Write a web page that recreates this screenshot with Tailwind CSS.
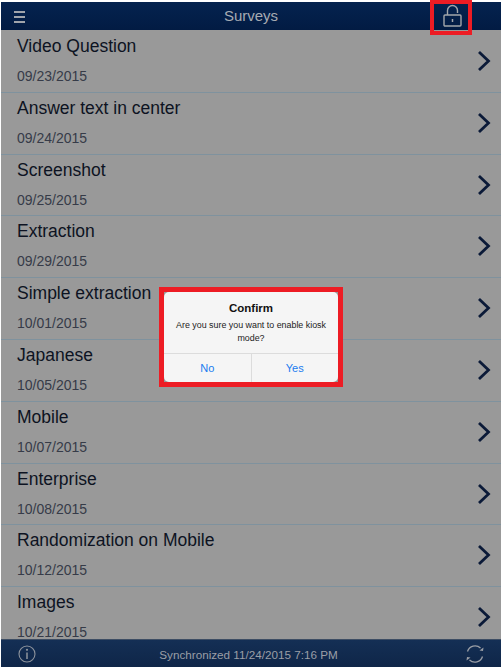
<!DOCTYPE html>
<html lang="en">
<head>
  <meta charset="UTF-8">
  <title>Surveys</title>
  <script src="https://cdn.jsdelivr.net/npm/@tailwindcss/browser@4"></script>
</head>
<body class="bg-white font-['Liberation_Sans',Arial,sans-serif]">
  <div class="relative w-[504px] h-[670px] overflow-hidden pt-[2px] pl-[1px] pr-[3px]">
    <!-- header -->
    <div class="h-[28px] bg-linear-to-b from-[#05234f] to-[#021b43] flex items-center relative">
      <svg class="ml-[13px] mt-[1px] w-[11px] h-[12px]" viewBox="0 0 11 12"><path d="M0 1h11M0 6h11M0 11h11" stroke="#a0a4ab" stroke-width="2"/></svg>
      <div class="absolute inset-x-0 pt-[1px] text-center text-[15px] text-[#a7abb2]">Surveys</div>
      <svg class="absolute left-[441px] top-[2px] w-[20px] h-[24px]" viewBox="0 0 20 24" fill="none">
        <path d="M5.500 11V6.500a5 5 0 0 1 10 0V9" stroke="#a3a6ab" stroke-width="1.4"/>
        <rect x="2" y="11" width="17" height="11" rx="1" stroke="#a3a6ab" stroke-width="1.4"/>
        <path d="M10.500 15v3" stroke="#a3a6ab" stroke-width="1.5"/>
      </svg>
    </div>

    <!-- survey list -->
    <div class="h-[609px] pt-[1px] overflow-hidden bg-[#999999] text-[#0d1322]">
      <div class="h-[61.8px] border-b border-[#7f929e] pl-[16px] relative">
        <div class="pt-[4px] text-[17.5px] leading-[22px]">Video Question</div>
        <div class="mt-[11px] text-[14px] leading-[16px] text-[#363b48]">09/23/2015</div>
        <svg class="absolute right-[10px] top-[19px] w-[14px] h-[22px]" viewBox="0 0 14 22" fill="none"><path d="M2 2l9.500 9-9.500 9" stroke="#0b1a38" stroke-width="2.8"/></svg>
      </div>
      <div class="h-[61.8px] border-b border-[#7f929e] pl-[16px] relative">
        <div class="pt-[4px] text-[17.5px] leading-[22px]">Answer text in center</div>
        <div class="mt-[11px] text-[14px] leading-[16px] text-[#363b48]">09/24/2015</div>
        <svg class="absolute right-[10px] top-[19px] w-[14px] h-[22px]" viewBox="0 0 14 22" fill="none"><path d="M2 2l9.500 9-9.500 9" stroke="#0b1a38" stroke-width="2.8"/></svg>
      </div>
      <div class="h-[61.8px] border-b border-[#7f929e] pl-[16px] relative">
        <div class="pt-[4px] text-[17.5px] leading-[22px]">Screenshot</div>
        <div class="mt-[11px] text-[14px] leading-[16px] text-[#363b48]">09/25/2015</div>
        <svg class="absolute right-[10px] top-[19px] w-[14px] h-[22px]" viewBox="0 0 14 22" fill="none"><path d="M2 2l9.500 9-9.500 9" stroke="#0b1a38" stroke-width="2.8"/></svg>
      </div>
      <div class="h-[61.8px] border-b border-[#7f929e] pl-[16px] relative">
        <div class="pt-[4px] text-[17.5px] leading-[22px]">Extraction</div>
        <div class="mt-[11px] text-[14px] leading-[16px] text-[#363b48]">09/29/2015</div>
        <svg class="absolute right-[10px] top-[19px] w-[14px] h-[22px]" viewBox="0 0 14 22" fill="none"><path d="M2 2l9.500 9-9.500 9" stroke="#0b1a38" stroke-width="2.8"/></svg>
      </div>
      <div class="h-[61.8px] border-b border-[#7f929e] pl-[16px] relative">
        <div class="pt-[4px] text-[17.5px] leading-[22px]">Simple extraction</div>
        <div class="mt-[11px] text-[14px] leading-[16px] text-[#363b48]">10/01/2015</div>
        <svg class="absolute right-[10px] top-[19px] w-[14px] h-[22px]" viewBox="0 0 14 22" fill="none"><path d="M2 2l9.500 9-9.500 9" stroke="#0b1a38" stroke-width="2.8"/></svg>
      </div>
      <div class="h-[61.8px] border-b border-[#7f929e] pl-[16px] relative">
        <div class="pt-[4px] text-[17.5px] leading-[22px]">Japanese</div>
        <div class="mt-[11px] text-[14px] leading-[16px] text-[#363b48]">10/05/2015</div>
        <svg class="absolute right-[10px] top-[19px] w-[14px] h-[22px]" viewBox="0 0 14 22" fill="none"><path d="M2 2l9.500 9-9.500 9" stroke="#0b1a38" stroke-width="2.8"/></svg>
      </div>
      <div class="h-[61.8px] border-b border-[#7f929e] pl-[16px] relative">
        <div class="pt-[4px] text-[17.5px] leading-[22px]">Mobile</div>
        <div class="mt-[11px] text-[14px] leading-[16px] text-[#363b48]">10/07/2015</div>
        <svg class="absolute right-[10px] top-[19px] w-[14px] h-[22px]" viewBox="0 0 14 22" fill="none"><path d="M2 2l9.500 9-9.500 9" stroke="#0b1a38" stroke-width="2.8"/></svg>
      </div>
      <div class="h-[61.8px] border-b border-[#7f929e] pl-[16px] relative">
        <div class="pt-[4px] text-[17.5px] leading-[22px]">Enterprise</div>
        <div class="mt-[11px] text-[14px] leading-[16px] text-[#363b48]">10/08/2015</div>
        <svg class="absolute right-[10px] top-[19px] w-[14px] h-[22px]" viewBox="0 0 14 22" fill="none"><path d="M2 2l9.500 9-9.500 9" stroke="#0b1a38" stroke-width="2.8"/></svg>
      </div>
      <div class="h-[61.8px] border-b border-[#7f929e] pl-[16px] relative">
        <div class="pt-[4px] text-[17.5px] leading-[22px]">Randomization on Mobile</div>
        <div class="mt-[11px] text-[14px] leading-[16px] text-[#363b48]">10/12/2015</div>
        <svg class="absolute right-[10px] top-[19px] w-[14px] h-[22px]" viewBox="0 0 14 22" fill="none"><path d="M2 2l9.500 9-9.500 9" stroke="#0b1a38" stroke-width="2.8"/></svg>
      </div>
      <div class="h-[61.8px] pl-[16px] relative">
        <div class="pt-[4px] text-[17.5px] leading-[22px]">Images</div>
        <div class="mt-[11px] text-[14px] leading-[16px] text-[#363b48]">10/21/2015</div>
        <svg class="absolute right-[10px] top-[19px] w-[14px] h-[22px]" viewBox="0 0 14 22" fill="none"><path d="M2 2l9.500 9-9.500 9" stroke="#0b1a38" stroke-width="2.8"/></svg>
      </div>
    </div>

    <!-- footer -->
    <div class="h-[28px] bg-linear-to-b from-[#142f55] to-[#0f2648] border-t border-[#3d4d63] flex items-center justify-between relative">
      <svg class="ml-[17px] w-[18px] h-[18px]" viewBox="0 0 18 18" fill="none"><circle cx="9" cy="9" r="8" stroke="#8e949d" stroke-width="1.1"/><path d="M9 7.500V14" stroke="#8e949d" stroke-width="1.500"/><circle cx="9" cy="4.800" r="1.100" fill="#8e949d"/></svg>
      <div class="absolute inset-x-0 pr-[5px] pt-[2px] text-center text-[11.7px] text-[#9a9ea6]">Synchronized 11/24/2015 7:16 PM</div>
      <svg class="mr-[16px] w-[20px] h-[20px]" viewBox="0 0 20 20" fill="none">
        <path d="M2.500 7.500A8 8 0 0 1 15.500 4" stroke="#9a9ea6" stroke-width="1.300"/>
        <path d="M17.500 12.500A8 8 0 0 1 4.500 16" stroke="#9a9ea6" stroke-width="1.300"/>
        <path d="M14.500 6.500l3.500.5.500-3.500z" fill="#9a9ea6"/>
        <path d="M5.500 13.500l-3.500-.5-.5 3.500z" fill="#9a9ea6"/>
      </svg>
    </div>

    <!-- kiosk lock highlight -->
    <div class="absolute left-[430px] top-0 w-[42px] h-[35px] border-[4px] border-[#ed1c24]"></div>

    <!-- confirm dialog -->
    <div class="absolute left-[159px] top-[287px] w-[184px] h-[100px] border-[5px] border-[#ed1c24] bg-[#999999]">
      <div class="relative h-full rounded-[5px] bg-[#f5f5f5]">
        <div class="pt-[9px] text-center text-[11.5px] font-bold leading-[14px] text-[#111]">Confirm</div>
        <div class="mt-[4px] px-[6px] text-center text-[8.9px] leading-[13px] text-[#222]">Are you sure you want to enable kiosk mode?</div>
        <div class="absolute bottom-0 inset-x-0 h-[29px] flex border-t border-[#dcdcdc] text-[11px] text-[#1a7cf0]">
          <div class="flex-1 flex items-center justify-center border-r border-[#dcdcdc]">No</div>
          <div class="flex-1 flex items-center justify-center">Yes</div>
        </div>
      </div>
    </div>
  </div>
</body>
</html>
